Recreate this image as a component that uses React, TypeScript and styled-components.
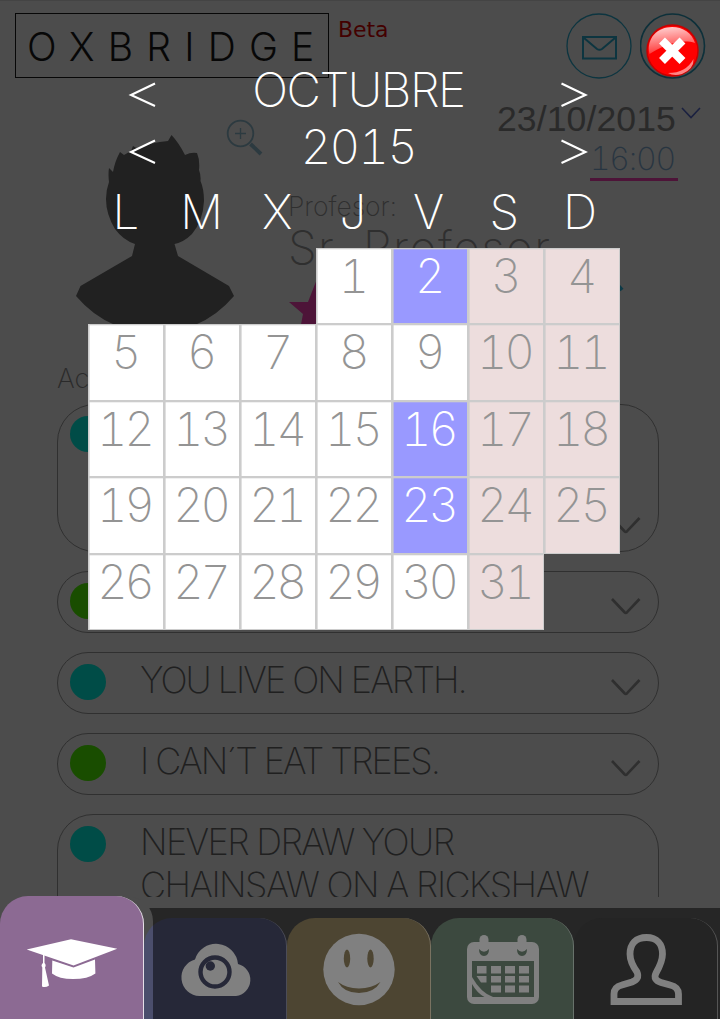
import React from 'react';
import styled, { createGlobalStyle } from 'styled-components';

const GlobalStyle = createGlobalStyle`
  * { box-sizing: border-box; }
  body { margin: 0; background: #4c4c4c; }
`;

const thin = `'Inter', 'Liberation Sans', sans-serif`;

const Screen = styled.div`
  position: relative;
  width: 720px;
  height: 1019px;
  overflow: hidden;
  display: flex;
  flex-direction: column;
  background: #4c4c4c;
  font-family: ${thin};
  font-weight: 200;
  font-variant-numeric: tabular-nums;
  white-space: nowrap;
`;

const Content = styled.main`
  height: 897px;
  overflow: hidden;
  border-top: 1px solid #444;
`;

const TopBar = styled.header`
  display: flex;
  align-items: flex-start;
  height: 90px;
  padding: 12px 15px 0;
`;

const Logo = styled.div`
  width: 314px;
  height: 65px;
  border: 1.5px solid #070707;
  display: flex;
  align-items: center;
  padding: 2px 0 0 11px;
  color: #070707;
  font-size: 39px;
  font-weight: 300;
  letter-spacing: 13.2px;
`;

const Beta = styled.span`
  margin: 3px auto 0 9px;
  color: #430000;
  font: 22px/27px 'DejaVu Sans', sans-serif;
  letter-spacing: -0.1px;
`;

const RoundIcons = styled.div`
  display: flex;
  gap: 8px;
  margin-right: -1px;
`;

const Profile = styled.section`
  display: flex;
  height: 268px;
  padding: 0 42px 0 76px;
`;

const Avatar = styled.svg`
  width: 190px;
  height: 236px;
  flex: none;
`;

const Teacher = styled.div`
  width: 200px;
  margin-left: 22px;
  padding-top: 99px;
  color: #2f2f2f;
`;

const Label = styled.div<{ $size: number; $line: number; $track?: number }>`
  font-size: ${p => p.$size}px;
  line-height: ${p => p.$line}px;
  letter-spacing: ${p => p.$track ?? 0}px;
`;

const Stars = styled.svg`
  display: block;
  width: 340px;
  height: 54px;
  margin-top: 1px;
`;

const When = styled.div`
  margin-left: auto;
  display: flex;
  flex-direction: column;
  align-items: flex-end;
`;

const DateText = styled.div`
  padding-top: 8px;
  color: #2a2a2a;
  font: 35.6px/41px 'Liberation Sans', sans-serif;
  letter-spacing: 0.1px;
`;

const Hour = styled.div`
  width: 88px;
  height: 42px;
  border-bottom: 3px solid #4d1438;
  color: #283541;
  font-size: 32px;
  line-height: 40px;
  letter-spacing: -1.3px;
`;

const DateRow = styled.div`
  display: flex;
  height: 48px;
  margin-right: -23px;
  gap: 5px;
`;

const ListTitle = styled.div`
  height: 45px;
  padding-left: 57px;
  color: #2a2a2a;
  font-size: 27px;
  line-height: 39px;
`;

const Cards = styled.div`
  display: flex;
  flex-direction: column;
  gap: 18.5px;
  padding: 0 61px 0 57px;
`;

const Card = styled.article<{ $height: number; $radius: number }>`
  display: flex;
  flex: none;
  height: ${p => p.$height}px;
  border: 1.6px solid #303030;
  border-radius: ${p => p.$radius}px;
  padding: 11px 17px 0 12px;
`;

const Dot = styled.span<{ $color: string }>`
  flex: none;
  width: 36px;
  height: 36px;
  border-radius: 50%;
  background: ${p => p.$color};
`;

const Phrase = styled.p<{ $track?: number }>`
  margin: -5px auto 0 34px;
  color: #202020;
  font-size: 36px;
  line-height: 43px;
  white-space: pre;
  letter-spacing: ${p => p.$track ?? 0}px;
`;

const CardArrow = styled.svg<{ $end?: boolean }>`
  width: 30px;
  height: 18px;
  align-self: ${p => (p.$end ? 'flex-end' : 'flex-start')};
  margin: ${p => (p.$end ? '0 0 17px' : '14px 0 0')};
  fill: none;
  stroke: #2f2f2f;
  stroke-width: 2.6;
`;

const Nav = styled.nav`
  position: relative;
  display: flex;
  align-items: flex-end;
  height: 122px;
  background: linear-gradient(#4c4c4c 11px, #262626 11px);
`;

const Halo = styled.div`
  position: absolute;
  inset: 0 auto 0 0;
  width: 153px;
  border-radius: 0 24px 0 0;
  background: #4c4c4c;
`;

const Tab = styled.div<{ $bg: string; $edge: string; $width?: number; $active?: boolean }>`
  position: relative;
  flex: none;
  width: ${p => p.$width ?? 144}px;
  height: ${p => (p.$active ? 123 : 101)}px;
  border-right: 1px solid ${p => p.$edge};
  border-radius: 28px 28px 0 0;
  background: ${p => p.$bg};
  svg { display: block; }
`;

const Modal = styled.div`
  position: absolute;
  inset: 0;
  padding: 61px 0 0 88px;
  color: #fff;
`;

const Picker = styled.div`
  display: grid;
  grid-template-columns: 109px 1fr 109px;
  width: 540px;
  height: 57px;
  font-size: 47.5px;
  line-height: 57px;
  text-align: center;
`;

const Title = styled.span<{ $track: number }>`
  letter-spacing: ${p => p.$track}px;
  margin-left: 1px;
`;

const Arrow = styled.svg`
  width: 109px;
  height: 57px;
  fill: none;
  stroke: #fff;
  stroke-width: 2.1;
`;

const Week = styled.div`
  display: grid;
  grid-template-columns: repeat(7, 75.7px);
  height: 72px;
  font-size: 47.5px;
  line-height: 74px;
  text-align: center;
`;

const Days = styled.div`
  display: grid;
  grid-template-columns: repeat(7, 76px);
  grid-auto-rows: 76.5px;
  width: 532px;
  padding-top: 0.5px;
`;

type Kind = 'plain' | 'marked' | 'weekend';
const fills: Record<Kind, string> = { plain: '#fff', marked: '#9999ff', weekend: '#eddddd' };

const Day = styled.div<{ $kind: Kind; $first: boolean }>`
  ${p => (p.$first ? 'grid-column: 4;' : '')}
  border: 1px solid #ccc;
  box-shadow: inset 1px 0 rgba(204, 204, 204, 0.6), inset 0 1px rgba(204, 204, 204, 0.3);
  background: ${p => fills[p.$kind]};
  color: ${p => (p.$kind === 'marked' ? '#fff' : '#949494')};
  font-size: 47px;
  line-height: 53px;
  letter-spacing: -3.2px;
  text-indent: -3px;
  text-align: center;
`;

const Close = styled.svg`
  position: absolute;
  left: 645px;
  top: 23px;
  width: 55px;
  height: 55px;
`;

const teal = '#004c47';
const green = '#194d00';

const RightChevron = ({ end }: { end?: boolean }) => (
  <CardArrow $end={end} viewBox="0 0 30 18"><path d="M1 2 13.5 15.2Q14.8 16.4 16.1 15.2L28.500 2" /></CardArrow>
);

const Prev = () => <Arrow viewBox="0 0 109 57"><path d="M67 22.500 43 34 67 45" /></Arrow>;
const Next = () => <Arrow viewBox="0 0 109 57"><path d="M42.500 22.500 66.500 34 42.500 45" /></Arrow>;

export default function App() {
  const kindOf = (day: number): Kind =>
    [2, 16, 23].includes(day) ? 'marked' : (day + 2) % 7 >= 5 ? 'weekend' : 'plain';

  return (
    <>
      <GlobalStyle />
      <Screen>
        <Content>
          <TopBar>
            <Logo>OXBRIDGE</Logo>
            <Beta>Beta</Beta>
            <RoundIcons>
              <svg width="66" height="66" viewBox="0 0 66 66" fill="none" stroke="#0d3540">
                <circle cx="33" cy="33" r="32" strokeWidth="1.3" />
                <path d="M17 24H50V45.500H17ZM18 25 31 36Q33.500 37.500 36 36L49 25" strokeWidth="2" />
              </svg>
              <svg width="66" height="66" viewBox="0 0 66 66" fill="none" stroke="#0d303a">
                <circle cx="32.500" cy="33" r="32" strokeWidth="1.6" />
              </svg>
            </RoundIcons>
          </TopBar>

          <Profile>
            <Avatar viewBox="76 91 190 236">
              <path
                fill="#212121"
                d="M109 168 L113 172 Q115 161 120 152 L124 155 L131 151 L133 146 L138 149 Q151 142 168 141 L171.500 135 Q179 143 185 155 Q191 152 197 153 Q200 160 199 170 Q201 175 200.500 181 Q204 189 204 201 Q203 221 192 234 Q184 242 174.500 244 L178 256 L229 286 L234 296 Q217 316 195 325 H115 Q93 316 76 296 L80.500 286 L132 256 L135 244 Q123 240 115 229 Q106 214 106 199 Q106 190 109 182 Q108 174 109 168Z"
              />
              <g fill="none" stroke="#2c3a40">
                <circle cx="240.500" cy="133.500" r="12.800" strokeWidth="1.8" />
                <path d="M235 133.500H246M240.500 128V139" strokeWidth="1.300" />
                <path d="M250.500 144 261 154" strokeWidth="3.800" />
              </g>
            </Avatar>
            <Teacher>
              <Label $size={26.500} $line={32}>Profesor:</Label>
              <Label $size={46} $line={50} $track={1.5}>Sr. Profesor</Label>
              <Stars viewBox="288 273 340 54">
                <path fill="#4d1438" d="M289 302H308L317 279 325 302H345L329 315 335 335 317 323 299 335 303 314Z" />
                <path d="M612 279 622 290" stroke="#0d3a47" strokeWidth="4" />
              </Stars>
            </Teacher>
            <When>
              <DateRow>
                <DateText>23/10/2015</DateText>
                <svg width="20" height="30" viewBox="0 0 20 30" fill="none" stroke="#1b2140" strokeWidth="1.6">
                  <path d="M1 17 10 26.500 19 17" />
                </svg>
              </DateRow>
              <Hour>16:00</Hour>
            </When>
          </Profile>

          <ListTitle>Actividades</ListTitle>

          <Cards>
            <Card $height={148} $radius={38}><Dot $color={teal} /><Phrase /><RightChevron end /></Card>
            <Card $height={62.5} $radius={31}><Dot $color={green} /><Phrase /><RightChevron /></Card>
            <Card $height={62.5} $radius={31}><Dot $color={teal} /><Phrase $track={-1.9}>YOU LIVE ON EARTH.</Phrase><RightChevron /></Card>
            <Card $height={62.5} $radius={31}><Dot $color={green} /><Phrase $track={-1.85}>I CAN´T EAT TREES.</Phrase><RightChevron /></Card>
            <Card $height={149} $radius={36}>
              <Dot $color={teal} />
              <Phrase $track={-1.6}>{'NEVER DRAW YOUR\nCHAINSAW ON A RICKSHAW'}</Phrase>
            </Card>
          </Cards>
        </Content>

        <Nav>
          <Halo />
          <Tab $active $bg="#8c6a93" $edge="#e6dfe8">
            <svg width="143" height="123" viewBox="0 896 143 123" fill="#fff">
              <path d="M26.700 949.500 71 939.300 117.300 948.800 73.500 965.500Z" />
              <path d="M52.300 960.500 73.500 967.500 95 959.500 95.400 973.500Q88 979 73 979Q59 979 52 973.500Z" />
              <path d="M43 955H44.500V963Q46.500 965 45 967.500L49 985.500Q45.500 988 42 986.500L42.300 967.500Q40.500 965 43 963Z" />
            </svg>
          </Tab>
          <Tab $bg="linear-gradient(90deg, #4b4e6c 9px, #262838 9px)" $edge="#4c4d58" $width={143}>
            <svg width="142" height="101" viewBox="144 918 142 101">
              <path fill="#808080" d="M199.500 996A18.600 18.600 0 0 1 195 959.500A22 22 0 0 1 238 964A16.300 16.300 0 0 1 236 996Z" />
              <circle cx="215" cy="972" r="14.500" fill="#808080" stroke="#262838" strokeWidth="4.400" />
              <circle cx="210.300" cy="966" r="4.700" fill="#262838" />
            </svg>
          </Tab>
          <Tab $bg="#4d4532" $edge="#7a7261">
            <svg width="143" height="101" viewBox="287 918 143 101">
              <circle cx="359" cy="969.500" r="35.700" fill="#808080" />
              <g fill="#4d4532">
                <ellipse cx="347" cy="958.500" rx="3.200" ry="9" />
                <ellipse cx="370.500" cy="958.500" rx="3.200" ry="9" />
                <path d="M338 982Q346 988 359 988.500Q372 988 380.500 982Q374 993 359 993Q344 993 338 982Z" />
              </g>
            </svg>
          </Tab>
          <Tab $bg="#3c493f" $edge="#68726b" $width={143}>
            <svg width="142" height="101" viewBox="431 918 142 101">
              <rect x="467" y="942" width="72" height="62" rx="7" fill="#808080" />
              <path fill="#3c493f" d="M472 961H534V997H493Q481 993 472 977Z" />
              <path fill="#3c493f" d="M472 984Q477 993 484.500 997H472Z" />
              <g fill="#808080">
                <path d="M477 966H486.500V973.500H477ZM491 966H501V973.500H491ZM505 966H515V973.500H505ZM519 966H529V973.500H519ZM491 976H501V982.500H491ZM505 976H515V982.500H505ZM519 976H529V982.500H519ZM491 985.500H501V992.500H491ZM505 985.500H515V992.500H505ZM519 985.500H529V992.500H519ZM476.500 976H486.500V982.500H481Z" />
                <rect x="479.500" y="935" width="9" height="18" rx="4.500" />
                <rect x="517.500" y="935" width="9" height="18" rx="4.500" />
              </g>
              <path fill="#3c493f" d="M479 949Q484 954.500 489 949Q489 956 484 956Q479 956 479 949ZM517 949Q522 954.500 527 949Q527 956 522 956Q517 956 517 949Z" />
            </svg>
          </Tab>
          <Tab $bg="#242424" $edge="#555">
            <svg width="143" height="101" viewBox="574 918 143 101" fill="none" stroke="#808080" strokeWidth="6.800">
              <path d="M614 1001.500V994Q614 987 622 985L632 982Q640 979 637 972C632 965 630 960 630 954C630 944 636 937.500 646.500 937.500C657 937.500 662.500 944 662.500 954C662.500 961 660 966 656 973C653.500 978 656 981 661 982.500L670 985Q678.500 987 678.500 994V1001.500Z" />
            </svg>
          </Tab>
        </Nav>

        <Modal>
          <Picker><Prev /><Title $track={-1.5}>OCTUBRE</Title><Next /></Picker>
          <Picker><Prev /><Title $track={-1.8}>2015</Title><Next /></Picker>
          <Week>{[...'LMXJVSD'].map(d => <span key={d}>{d}</span>)}</Week>
          <Days>
            {Array.from({ length: 31 }, (_, i) => i + 1).map(d => (
              <Day key={d} $kind={kindOf(d)} $first={d === 1}>{d}</Day>
            ))}
          </Days>
          <Close viewBox="645 23 55 55">
            <defs>
              <linearGradient id="shine" x1="0.3" y1="0" x2="0.5" y2="1">
                <stop offset="0" stopColor="#ffd0d0" />
                <stop offset="1" stopColor="#ff2c2c" />
              </linearGradient>
            </defs>
            <circle cx="672.500" cy="50.500" r="25.500" fill="#f00" stroke="#c80000" strokeWidth="1.500" />
            <path fill="url(#shine)" d="M649.500 54C646 38 658 27 672 27C683 27 692 33 695 43C686 40 674 42 665 46C658 49 654 51 649.500 54Z" />
            <path fill="#ff8585" d="M668 73Q686 73 693.500 59Q694 69 682 74Q674 76.500 668 73Z" />
            <path d="M662 40.500 682.500 61M682.500 40.500 662 61" stroke="#fff" strokeWidth="8.300" />
          </Close>
        </Modal>
      </Screen>
    </>
  );
}
